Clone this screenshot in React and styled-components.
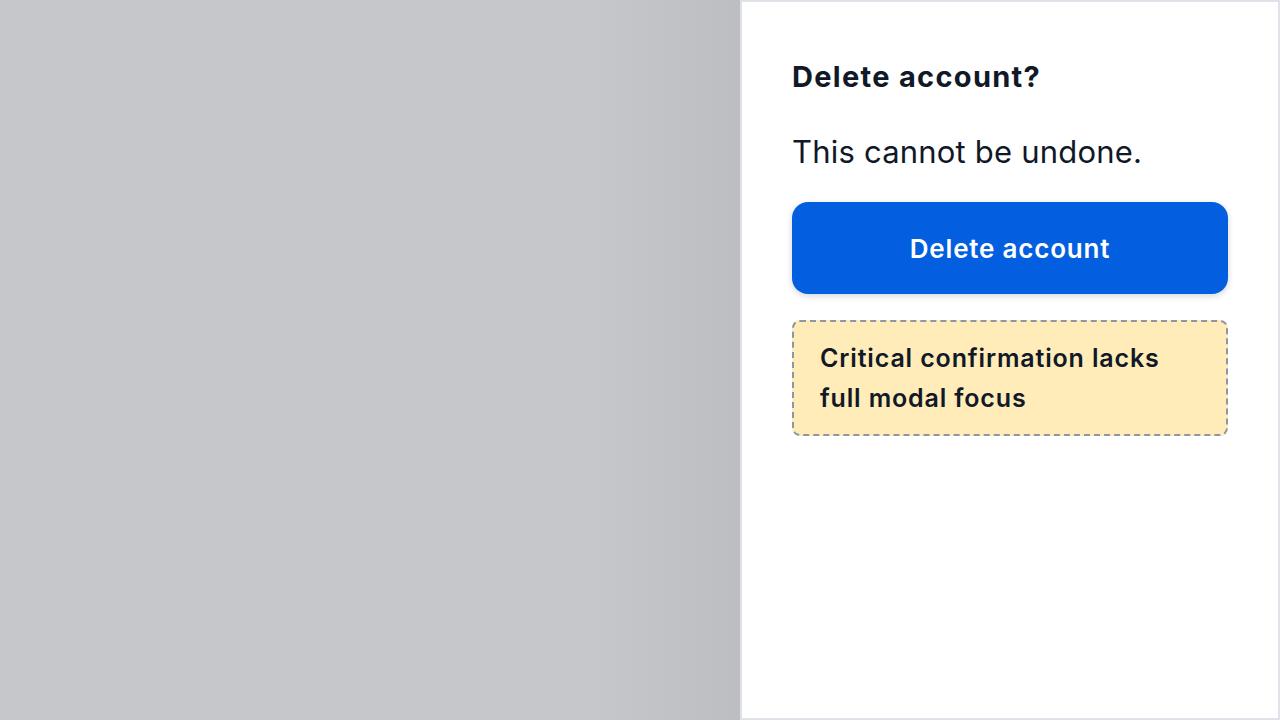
import React from 'react';
import styled, { createGlobalStyle } from 'styled-components';

const GlobalStyle = createGlobalStyle`
  html, body {
    margin: 0;
    padding: 0;
    height: 100%;
  }
  body {
    font-family: Inter, "Noto Sans", sans-serif;
    color: #111827;
  }
  #root {
    height: 100%;
  }
`;

function App() {
  return (
    <>
      <GlobalStyle />
      <Page>
        <Backdrop />
        <Drawer>
          <Title>Delete account?</Title>
          <Message>This cannot be undone.</Message>
          <DangerButton type="button">Delete account</DangerButton>
          <Note>Critical confirmation lacks full modal focus</Note>
        </Drawer>
      </Page>
    </>
  );
}

export default App;

const Page = styled.div`
  display: flex;
  height: 720px;
  width: 1280px;
  overflow: hidden;
  background-color: #c5c7cb;
`;

const Backdrop = styled.div`
  flex: 1;
  background: linear-gradient(to right, #c5c7cb 0%, #c5c7cb 80%, #bcbec2 100%);
`;

const Drawer = styled.aside`
  width: 540px;
  box-sizing: border-box;
  background-color: #fff;
  border: 2px solid #e0e2ea;
  padding: 51px 50px;
  display: flex;
  flex-direction: column;
`;

const Title = styled.h2`
  margin: 0;
  font-size: 29px;
  line-height: 48px;
  font-weight: 700;
  letter-spacing: 1.3px;
`;

const Message = styled.p`
  margin: 31px 0 0;
  font-size: 31px;
  line-height: 40px;
  font-weight: 400;
  letter-spacing: 0.2px;
`;

const DangerButton = styled.button`
  margin-top: 30px;
  height: 92px;
  border: none;
  border-radius: 16px;
  background-color: #035fdf;
  color: #fff;
  font-family: inherit;
  font-size: 26px;
  font-weight: 600;
  letter-spacing: 0.8px;
  box-shadow: 0 2px 6px rgba(15, 23, 42, 0.18);
  cursor: pointer;
`;

const Note = styled.div`
  margin-top: 26px;
  padding: 16px 26px;
  border: 2px dashed #8e96a6;
  border-radius: 8px;
  background-color: #ffecb8;
  font-size: 25px;
  line-height: 40px;
  font-weight: 600;
  letter-spacing: 0.85px;
`;
